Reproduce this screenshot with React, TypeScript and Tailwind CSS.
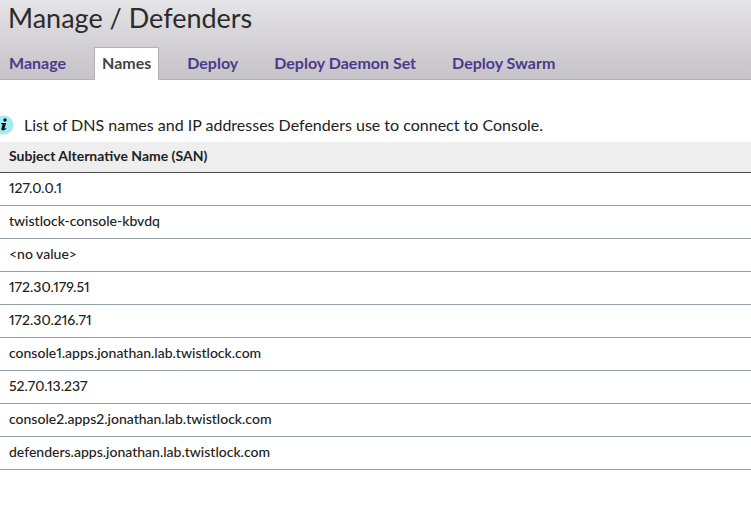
const tabs = ["Manage", "Names", "Deploy", "Deploy Daemon Set", "Deploy Swarm"];

const names = [
  "127.0.0.1",
  "twistlock-console-kbvdq",
  "<no value>",
  "172.30.179.51",
  "172.30.216.71",
  "console1.apps.jonathan.lab.twistlock.com",
  "52.70.13.237",
  "console2.apps2.jonathan.lab.twistlock.com",
  "defenders.apps.jonathan.lab.twistlock.com",
];

function InfoIcon() {
  return (
    <svg className="-ml-[6px] h-5 w-5 shrink-0" viewBox="0 0 20 20" aria-hidden="true">
      <circle cx="10" cy="10" r="9.5" fill="#a3eaf7" />
      <circle cx="11" cy="5" r="1.7" fill="#111" />
      <path d="M7 8h5.200l-1.700 5.400c-.1.5.2.5.6.2l.8-.7.5.5c-1 1.300-2.100 2-3.400 2-1.400 0-2-.8-1.600-1.900l1.100-3.900c.1-.4-.1-.5-.4-.5H7z" fill="#111" />
    </svg>
  );
}

export default function App() {
  return (
    <div className="min-h-screen overflow-x-hidden bg-white font-['Lato',sans-serif] text-[#222] proportional-nums">
      <header className="border-b border-[#b3b0b6] bg-linear-to-b from-[#e5e4e7] to-[#c5c2c8]">
        <h1 className="px-2 text-[27px] leading-9 font-normal text-[#2b2b2b]">Manage / Defenders</h1>
        <nav className="-mb-px flex gap-5 pt-[11px] pl-px">
          {tabs.map((tab) => (
            <a
              key={tab}
              href="#"
              aria-current={tab === "Names" ? "page" : undefined}
              className={
                "border border-b-0 px-[7px] pt-[3px] pb-[5px] text-base leading-6 font-bold whitespace-nowrap " +
                (tab === "Names" ? "border-[#b3b0b6] bg-white text-[#444]" : "border-transparent text-[#4b3a8c]")
              }
            >
              {tab}
            </a>
          ))}
        </nav>
      </header>
      <main className="pt-[33px]">
        <p className="flex items-center gap-[10px] pb-[5px] text-base leading-6">
          <InfoIcon />
          List of DNS names and IP addresses Defenders use to connect to Console.
        </p>
        <table className="w-full border-collapse text-left text-sm leading-5">
          <thead>
            <tr className="h-[30px] border-b border-[#4d4d4d] bg-[#eee]">
              <th scope="col" className="px-[9px] pb-px font-bold">Subject Alternative Name (SAN)</th>
            </tr>
          </thead>
          <tbody>
            {names.map((name) => (
              <tr key={name} className="h-[33px] border-b border-[#93a1a8]">
                <td className="px-[9px] pb-px font-medium">{name}</td>
              </tr>
            ))}
          </tbody>
        </table>
      </main>
    </div>
  );
}
